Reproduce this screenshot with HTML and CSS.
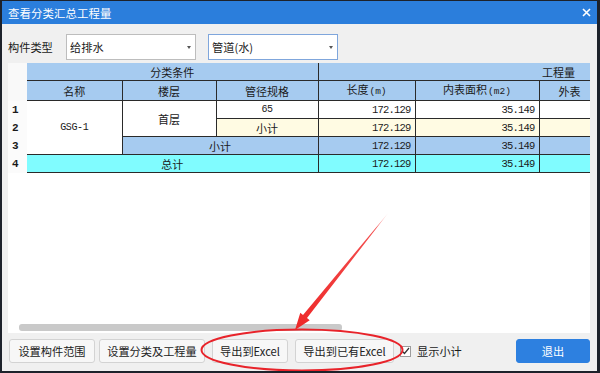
FILE: index.html
```html
<!DOCTYPE html>
<html lang="zh-CN">
<head>
    <meta charset="UTF-8">
    <title>查看分类汇总工程量</title>
    <link rel="stylesheet" href="styles.css">
</head>
<body>
    <div class="dialog">
        <div class="titlebar">
            <span class="title">查看分类汇总工程量</span>
            <svg class="close" width="9" height="9" viewBox="0 0 9 9">
                <path d="M1 1 L8 8 M8 1 L1 8" stroke="#fff" stroke-width="1.6"/>
            </svg>
        </div>

        <div class="content">
            <div class="filter-row">
                <span class="filter-label">构件类型</span>
                <div class="combo">给排水<span class="caret"></span></div>
                <div class="combo focused">管道(水)<span class="caret"></span></div>
            </div>

            <div class="grid-wrap">
                <table class="grid">
                    <colgroup>
                        <col style="width:19px">
                        <col style="width:95px">
                        <col style="width:94px">
                        <col style="width:102px">
                        <col style="width:97px">
                        <col style="width:124px">
                        <col style="width:110px">
                    </colgroup>
                    <tr class="head">
                        <td class="num"></td>
                        <td colspan="3" class="first">分类条件</td>
                        <td colspan="3" class="qty-head">工程量</td>
                    </tr>
                    <tr class="head">
                        <td class="num"></td>
                        <td class="first">名称</td>
                        <td>楼层</td>
                        <td>管径规格</td>
                        <td>长度<span class="unit">(m)</span></td>
                        <td>内表面积<span class="unit">(m2)</span></td>
                        <td class="clip">外表</td>
                    </tr>
                    <tr>
                        <td class="num">1</td>
                        <td rowspan="3" class="first white mono">GSG-1</td>
                        <td rowspan="2" class="white">首层</td>
                        <td class="white mono">65</td>
                        <td class="white val">172.129</td>
                        <td class="white val">35.149</td>
                        <td class="white"></td>
                    </tr>
                    <tr>
                        <td class="num">2</td>
                        <td class="yellow">小计</td>
                        <td class="yellow val">172.129</td>
                        <td class="yellow val">35.149</td>
                        <td class="yellow"></td>
                    </tr>
                    <tr>
                        <td class="num">3</td>
                        <td colspan="2" class="blue">小计</td>
                        <td class="blue val">172.129</td>
                        <td class="blue val">35.149</td>
                        <td class="blue"></td>
                    </tr>
                    <tr>
                        <td class="num">4</td>
                        <td colspan="3" class="first cyan">总计</td>
                        <td class="cyan val">172.129</td>
                        <td class="cyan val">35.149</td>
                        <td class="cyan"></td>
                    </tr>
                </table>
                <div class="hscroll"><div class="thumb"></div></div>
            </div>

            <div class="footer">
                <button class="btn b1">设置构件范围</button>
                <button class="btn b2">设置分类及工程量</button>
                <button class="btn b3">导出到Excel</button>
                <button class="btn b4">导出到已有Excel</button>
                <span class="check">
                    <svg width="9" height="8" viewBox="0 0 9 8"><path d="M1 4 L3.5 6.5 L8 1" fill="none" stroke="#333" stroke-width="1.2"/></svg>
                </span>
                <span class="check-label">显示小计</span>
                <button class="btn exit">退出</button>
            </div>
        </div>

        <!-- red annotation drawn over the dialog -->
        <svg class="annotation" width="600" height="373" viewBox="0 0 600 373">
            <defs>
                <linearGradient id="fade" x1="389" y1="212" x2="300" y2="325" gradientUnits="userSpaceOnUse">
                    <stop offset="0" stop-color="#f23a3a" stop-opacity="0"/>
                    <stop offset="0.15" stop-color="#f23a3a" stop-opacity="0.9"/>
                    <stop offset="1" stop-color="#ee2a2a"/>
                </linearGradient>
            </defs>
            <polygon points="295,330 300.3,312.7 303,314.9 389,212 307,318.1 309.7,320.3" fill="url(#fade)"/>
            <ellipse cx="302" cy="350" rx="100.5" ry="20.5" fill="none" stroke="#e8232a" stroke-width="2"/>
        </svg>
    </div>
</body>
</html>
```

FILE: styles.css
```css
body {
    margin: 0;
    padding: 0;
    font-family: "Noto Sans CJK SC", "Noto Sans", sans-serif;
    font-size: 11px;
    color: #1a1a1a;
}

.dialog {
    position: relative;
    width: 600px;
    height: 373px;
    box-sizing: border-box;
    border-top: 1px solid #1d222b;
    border-left: 2px solid #1d222b;
    border-right: 3px solid #1d222b;
    border-bottom: 2px solid #1d222b;
    background-color: #f0f0f0;
    display: flex;
    flex-direction: column;
    overflow: hidden;
}

.titlebar {
    height: 23px;
    background-color: #2b7edc;
    color: white;
    display: flex;
    align-items: center;
    justify-content: space-between;
    padding: 0 6px 0 6px;
    flex-shrink: 0;
}

.title {
    font-size: 11.4px;
    letter-spacing: 0.1px;
}

.content {
    flex: 1;
    display: flex;
    flex-direction: column;
    padding: 0 7px 0 6px;
}

.filter-row {
    display: flex;
    align-items: center;
    height: 26px;
    margin-top: 10px;
}

.filter-label {
    width: 58px;
    font-size: 11.2px;
}

.combo {
    position: relative;
    width: 130px;
    height: 26px;
    box-sizing: border-box;
    background-color: white;
    border: 1px solid #bdbdbd;
    padding-left: 3px;
    display: flex;
    align-items: center;
    font-size: 11.2px;
}

.combo.focused {
    margin-left: 12px;
    border-color: #7fa6dc;
}

.caret {
    position: absolute;
    right: 4px;
    top: 11px;
    border-left: 2.5px solid transparent;
    border-right: 2.5px solid transparent;
    border-top: 3px solid #555;
}

.grid-wrap {
    margin-top: 3px;
    width: 582px;
    height: 270px;
    background-color: white;
    position: relative;
    overflow: hidden;
}

.grid {
    border-collapse: collapse;
    table-layout: fixed;
    width: 641px;
}

.grid td {
    height: 17px;
    padding: 0;
    border: 1px solid #2a2a2a;
    text-align: center;
    white-space: nowrap;
    overflow: hidden;
    line-height: 16px;
}

.grid tr:first-child td {
    border-top: none;
}

.grid td.num {
    border: none;
    background-color: #fbfbfb;
    text-align: left;
    padding-left: 4px;
    font-family: "Liberation Mono", monospace;
    font-weight: bold;
    font-size: 11px;
}

.grid td.first {
    border-left: none;
}

.head td {
    background-color: #a6cbf0;
}

.head td.num {
    background-color: #f9f9f9;
}

.qty-head {
    text-align: right !important;
    padding-right: 74px !important;
}

.unit {
    font-family: "Liberation Mono", monospace;
    font-size: 9.5px;
    margin-left: 1px;
}

.clip {
    text-align: left !important;
    padding-left: 19px !important;
    border-right: none !important;
}

.white {
    background-color: white;
}

.yellow {
    background-color: #fffbe3;
}

.blue {
    background-color: #a6cbf0;
}

.cyan {
    background-color: #80fcff;
}

.mono {
    font-family: "Liberation Mono", monospace;
    font-size: 10px;
    letter-spacing: -0.4px;
}

.val {
    text-align: right !important;
    padding-right: 4px !important;
    font-family: "Liberation Mono", monospace;
    font-size: 10.5px;
    letter-spacing: -0.8px;
}

.grid tr td:last-child {
    border-right: none;
}

.hscroll {
    position: absolute;
    left: 0;
    right: 0;
    bottom: 2px;
    height: 7px;
}

.thumb {
    margin-left: 11px;
    width: 323px;
    height: 7px;
    border-radius: 3px;
    background-color: #c9c9c9;
}

.footer {
    display: flex;
    align-items: center;
    margin-top: 6px;
    height: 24px;
}

.btn {
    height: 24px;
    box-sizing: border-box;
    border: 1px solid #d3d3d3;
    border-radius: 3px;
    background-color: #f7f7f7;
    font-family: "Noto Sans CJK SC", "Noto Sans", sans-serif;
    font-size: 11.2px;
    color: #222;
    padding: 0;
}

.b1 {
    margin-left: 1px;
    width: 86px;
}

.b2 {
    margin-left: 4px;
    width: 106px;
}

.b3 {
    margin-left: 7px;
    width: 76px;
}

.b4 {
    margin-left: 7px;
    width: 99px;
}

.check {
    margin-left: 6px;
    width: 11px;
    height: 11px;
    box-sizing: border-box;
    border: 1px solid #9c9c9c;
    background-color: white;
    display: flex;
    align-items: center;
    justify-content: center;
}

.check-label {
    margin-left: 6px;
    font-size: 11.2px;
}

.exit {
    margin-left: auto;
    width: 74px;
    background-color: #2d80e0;
    border-color: #2d80e0;
    color: white;
}

.annotation {
    position: absolute;
    left: -2px;
    top: -1px;
}
```
